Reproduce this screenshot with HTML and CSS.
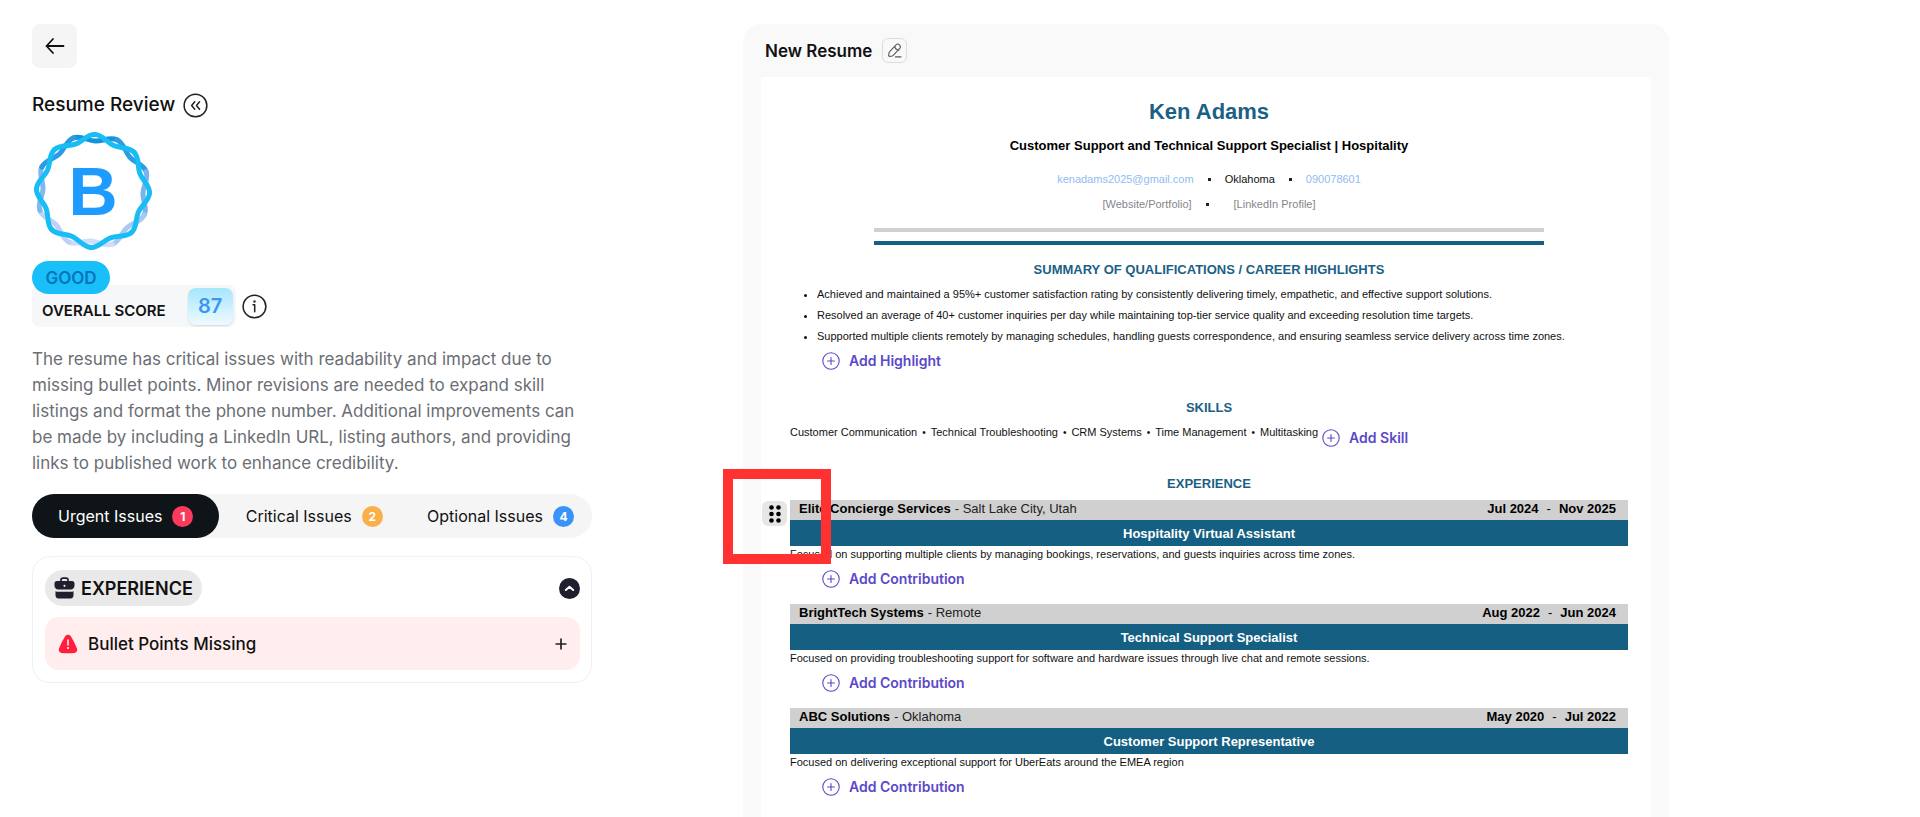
FILE: index.html
```
<!DOCTYPE html>
<html lang="en">
<head>
<meta charset="utf-8">
<title>Resume Review</title>
<link rel="stylesheet" href="styles.css">
</head>
<body>
<svg width="0" height="0" class="defs" aria-hidden="true">
  <symbol id="add" viewBox="0 0 18 18"><circle cx="9" cy="9" r="8.2" fill="none" stroke="currentColor" stroke-width="1.1"/><path d="M9 5.6v6.8M5.6 9h6.8" stroke="currentColor" stroke-width="1.1" stroke-linecap="round"/></symbol>
  <path id="lobe" d="M60 3.500C68 3.500 71.700 10.700 79.100 13.800S94.300 14.300 100 20" fill="none" stroke-width="5" stroke-linecap="round"/>
</svg>
<div class="app">
  <aside class="review">
    <button class="back" aria-label="Back"><svg width="20" height="18" viewBox="0 0 20 18" fill="none" stroke="#111" stroke-width="1.8" stroke-linecap="round" stroke-linejoin="round"><path d="M18.5 9H1.5M8 2L1.5 9L8 16"/></svg></button>
    <div class="title-row">
      <h1>Resume Review</h1>
      <button class="bare" aria-label="Collapse"><svg width="25" height="25" viewBox="0 0 26 26" fill="none" stroke="#222" stroke-width="1.6" stroke-linecap="round" stroke-linejoin="round"><circle cx="13" cy="13" r="11.8"/><path d="M12.2 9.2L9 13l3.2 3.8M17.2 9.2L14 13l3.2 3.8"/></svg></button>
    </div>
    <svg class="grade" width="120" height="120" viewBox="0 0 120 120" role="img" aria-label="Grade B">
      <g transform="rotate(-20 60 60)">
        <use href="#lobe" stroke="#1393dc"/>
        <use href="#lobe" stroke="#2f9ce2" transform="rotate(45 60 60)"/>
        <use href="#lobe" stroke="#79b4ec" transform="rotate(90 60 60)"/>
        <use href="#lobe" stroke="#a9c9f5" transform="rotate(135 60 60)"/>
        <use href="#lobe" stroke="#cfdcfc" transform="rotate(180 60 60)"/>
        <use href="#lobe" stroke="#bed2f9" transform="rotate(225 60 60)"/>
        <use href="#lobe" stroke="#7fb9ee" transform="rotate(270 60 60)"/>
        <use href="#lobe" stroke="#2c9ce2" transform="rotate(315 60 60)"/>
      </g>
      <g stroke="#19bdf6" transform="rotate(2 60 60)">
        <use href="#lobe"/>
        <use href="#lobe" transform="rotate(45 60 60)"/>
        <use href="#lobe" transform="rotate(90 60 60)"/>
        <use href="#lobe" transform="rotate(135 60 60)"/>
        <use href="#lobe" transform="rotate(180 60 60)"/>
        <use href="#lobe" transform="rotate(225 60 60)"/>
        <use href="#lobe" transform="rotate(270 60 60)"/>
        <use href="#lobe" transform="rotate(315 60 60)"/>
      </g>
      <text x="60" y="84" text-anchor="middle" class="letter">B</text>
    </svg>
    <div class="score-block">
      <span class="verdict">GOOD</span>
      <div class="score-row">
        <div class="score"><span>OVERALL SCORE</span><strong>87</strong></div>
        <button class="bare" aria-label="About the score"><svg width="25" height="25" viewBox="0 0 26 26" fill="none" stroke="#222" stroke-width="1.6" stroke-linecap="round" stroke-linejoin="round"><circle cx="13" cy="13" r="11.8"/><path d="M11.5 11.2h1.7v7.2"/><circle cx="13" cy="7.9" r=".5" fill="#222"/></svg></button>
      </div>
    </div>
    <p class="summary">The resume has critical issues with readability and impact due to missing bullet points. Minor revisions are needed to expand skill listings and format the phone number. Additional improvements can be made by including a LinkedIn URL, listing authors, and providing links to published work to enhance credibility.</p>
    <div class="tabs" role="tablist">
      <button class="tab active" role="tab">Urgent Issues <span class="count red">1</span></button>
      <button class="tab" role="tab">Critical Issues <span class="count amber">2</span></button>
      <button class="tab" role="tab">Optional Issues <span class="count blue">4</span></button>
    </div>
    <section class="card">
      <div class="card-head">
        <h2 class="topic"><svg width="21" height="22" viewBox="0 0 21 22"><path d="M7 5V3.2C7 2 7.700 1.200 9 1.200h3c1.300 0 2 .8 2 2V5" fill="none" stroke="#1f1f2e" stroke-width="1.700"/><path d="M3 4h15c1.600 0 2.500 1 2.500 2.500v2.300c0 2-1.600 3.700-3.600 3.700H4.100C2.100 12.500.5 10.800.5 8.800V6.500C.5 5 1.400 4 3 4z" fill="#1f1f2e"/><path d="M1.500 14.200c1 .5 2 .6 3 .6h12c1 0 2-.1 3-.6v4.100c0 2-1 3.200-3 3.200h-12c-2 0-3-1.200-3-3.200z" fill="#1f1f2e"/><circle cx="10.500" cy="8.800" r="1.100" fill="#e9e9e9"/></svg>EXPERIENCE</h2>
        <button class="bare" aria-label="Collapse section"><svg width="21" height="21" viewBox="0 0 21 21"><circle cx="10.500" cy="10.500" r="10.500" fill="#1f1f2e"/><path d="M6.800 12l3.700-3.200 3.700 3.200" fill="none" stroke="#fff" stroke-width="2" stroke-linecap="round" stroke-linejoin="round"/></svg></button>
      </div>
      <button class="issue"><svg width="20" height="20" viewBox="0 0 20 20"><path d="M7.200 2.300c1.200-2 4.400-2 5.600 0 2.500 4 4.500 8 6.200 12.300.8 2.300-.5 4.200-2.800 4.400-4.200.3-8.200.3-12.400 0C1.500 18.800.2 16.900 1 14.600 2.700 10.300 4.700 6.300 7.200 2.300z" fill="#ff1f3d"/><path d="M10 6v5" stroke="#fff" stroke-width="1.500" stroke-linecap="round"/><circle cx="10" cy="14" r="1" fill="#fff"/></svg><span>Bullet Points Missing</span><svg class="plus" width="12" height="12" viewBox="0 0 12 12"><path d="M6 .5v11M.5 6h11" stroke="#222" stroke-width="1.700"/></svg></button>
    </section>
  </aside>

  <main class="panel">
    <header class="panel-head">
      <h2>New Resume</h2>
      <button class="edit" aria-label="Rename"><svg width="15" height="15" viewBox="0 0 15 15" fill="none" stroke="#555" stroke-width="1.100" stroke-linecap="round" stroke-linejoin="round"><path d="M8.800 2.200L2.500 8.900c-.3.300-.5.700-.5 1.100l-.3 2.200c-.1.800.5 1.300 1.200 1.200l2.200-.4c.4-.1.800-.3 1.100-.6l6.300-6.700c1.100-1.200 1.500-2.400-.1-3.900-1.600-1.500-2.600-.8-3.600.4zM7.800 3.400c.3 2 2 3.500 4 3.700M8.500 13.900h5.500"/></svg></button>
    </header>
    <article class="paper">
      <h1 class="name">Ken Adams</h1>
      <p class="role">Customer Support and Technical Support Specialist | Hospitality</p>
      <p class="contact"><a href="#">kenadams2025@gmail.com</a><i></i><span>Oklahoma</span><i></i><a href="#">090078601</a></p>
      <p class="contact links"><span>[Website/Portfolio]</span><i></i><span class="linkedin">[LinkedIn Profile]</span></p>
      <hr class="rule grey"><hr class="rule">
      <h3>SUMMARY OF QUALIFICATIONS / CAREER HIGHLIGHTS</h3>
      <ul class="highlights">
        <li>Achieved and maintained a 95%+ customer satisfaction rating by consistently delivering timely, empathetic, and effective support solutions.</li>
        <li>Resolved an average of 40+ customer inquiries per day while maintaining top-tier service quality and exceeding resolution time targets.</li>
        <li>Supported multiple clients remotely by managing schedules, handling guests correspondence, and ensuring seamless service delivery across time zones.</li>
      </ul>
      <button class="add"><svg width="18" height="18"><use href="#add"/></svg>Add Highlight</button>
      <h3 class="later">SKILLS</h3>
      <div class="skills"><ul><li>Customer Communication</li><li>Technical Troubleshooting</li><li>CRM Systems</li><li>Time Management</li><li>Multitasking</li></ul><button class="add"><svg width="18" height="18"><use href="#add"/></svg>Add Skill</button></div>
      <h3 class="exp">EXPERIENCE</h3>
      <section class="job">
        <button class="drag" aria-label="Reorder"><svg width="12" height="18" viewBox="0 0 12 18"><circle cx="2.500" cy="2.500" r="2.300"/><circle cx="9.500" cy="2.500" r="2.300"/><circle cx="2.500" cy="9" r="2.300"/><circle cx="9.500" cy="9" r="2.300"/><circle cx="2.500" cy="15.500" r="2.300"/><circle cx="9.500" cy="15.500" r="2.300"/></svg></button>
        <span class="marker"></span>
        <div class="company"><b>Elite Concierge Services</b><span class="place">- Salt Lake City, Utah</span><span class="dates"><b>Jul 2024</b><span>-</span><b>Nov 2025</b></span></div>
        <h4>Hospitality Virtual Assistant</h4>
        <p>Focused on supporting multiple clients by managing bookings, reservations, and guests inquiries across time zones.</p>
        <button class="add"><svg width="18" height="18"><use href="#add"/></svg>Add Contribution</button>
      </section>
      <section class="job">
        <div class="company"><b>BrightTech Systems</b><span class="place">- Remote</span><span class="dates"><b>Aug 2022</b><span>-</span><b>Jun 2024</b></span></div>
        <h4>Technical Support Specialist</h4>
        <p>Focused on providing troubleshooting support for software and hardware issues through live chat and remote sessions.</p>
        <button class="add"><svg width="18" height="18"><use href="#add"/></svg>Add Contribution</button>
      </section>
      <section class="job">
        <div class="company"><b>ABC Solutions</b><span class="place">- Oklahoma</span><span class="dates"><b>May 2020</b><span>-</span><b>Jul 2022</b></span></div>
        <h4>Customer Support Representative</h4>
        <p>Focused on delivering exceptional support for UberEats around the EMEA region</p>
        <button class="add"><svg width="18" height="18"><use href="#add"/></svg>Add Contribution</button>
      </section>
    </article>
  </main>
</div>
</body>
</html>
```
FILE: styles.css
```
* { box-sizing: border-box; }
body { margin: 0; background: #fff; color: #111; font-family: Inter, "Liberation Sans", sans-serif; }
h1, h2, h3, h4, p, ul { margin: 0; padding: 0; }
button { font: inherit; color: inherit; border: 0; background: none; padding: 0; cursor: pointer; }
svg { display: block; flex: none; }
.defs { position: absolute; }

.app { display: grid; grid-template-columns: 743fr 926fr 251fr; min-height: 100vh; padding-top: 24px; }
.review { padding: 0 151px 0 32px; min-width: 0; }
.back { width: 45px; height: 44px; border-radius: 8px; background: #f5f5f5; display: grid; place-items: center; }
.title-row { display: flex; align-items: center; gap: 8px; margin-top: 24px; }
.title-row h1 { font-size: 19px; line-height: 26px; font-weight: 500; }
.grade { margin: 13px 0 0 1px; }
.letter { font: bold 68px "Liberation Sans", sans-serif; fill: #1e9bff; }

.score-block { margin-top: 10px; }
.verdict { position: relative; display: flex; align-items: center; justify-content: center; width: 78px; height: 33px; border-radius: 17px; background: #19bff9; color: #0873bd; font-size: 17px; font-weight: 600; }
.score-row { display: flex; align-items: center; gap: 6px; margin-top: -9px; }
.score { display: flex; align-items: center; gap: 22px; height: 42px; padding: 0 3px 0 10px; border-radius: 8px; background: #f6f7f9; }
.score span { font-size: 15px; font-weight: 600; padding-top: 8px; }
.score strong { width: 45px; height: 37px; border-radius: 8px; background: linear-gradient(#a5e6fc, #effaff); box-shadow: 0 1px 2px #0002; display: grid; place-items: center; font-size: 20px; font-weight: 600; color: #3a97f5; }

.summary { margin-top: 19px; color: #6b6e74; font-size: 17px; line-height: 26px; }

.tabs { display: flex; justify-content: space-between; height: 44px; margin-top: 18px; border-radius: 22px; background: #f5f5f5; }
.tab { display: flex; align-items: center; gap: 10px; padding: 0 18px 0 24px; font-size: 16px; white-space: nowrap; }
.tab.active { background: #0f1418; color: #fff; border-radius: 22px; padding: 0 26px; }
.count { width: 21px; height: 21px; border-radius: 50%; display: grid; place-items: center; color: #fff; font-size: 12px; font-weight: 700; }
.red { background: #fb3a5d; }
.amber { background: #f9b04b; }
.blue { background: #3a93fb; }

.card { margin-top: 18px; padding: 13px 11px 12px 12px; border: 1px solid #f0f0f0; border-radius: 18px; }
.card-head { display: flex; align-items: center; justify-content: space-between; }
.topic { display: flex; align-items: center; gap: 6px; height: 36px; padding: 0 9px; border-radius: 18px; background: #e9e9e9; font-size: 18px; font-weight: 600; }
.issue { display: flex; align-items: center; gap: 10px; width: 100%; height: 53px; margin-top: 11px; padding: 0 13px; border-radius: 14px; background: #ffeeed; font-size: 17px; font-weight: 500; }
.plus { margin-left: auto; }

.panel { min-width: 0; padding: 0 18px; border-radius: 18px 18px 0 0; background: #f9f9f9; display: flex; flex-direction: column; }
.panel-head { display: flex; align-items: center; gap: 10px; height: 53px; padding-left: 4px; }
.panel-head h2 { font-size: 17px; font-weight: 600; }
.edit { width: 25px; height: 25px; border: 1px solid #dcdcdc; border-radius: 6px; display: grid; place-items: center; }

.paper { flex: 1; padding: 21px 23px 16px 29px; background: #fff; color: #111; font-family: "Liberation Sans", Arial, sans-serif; font-size: 11px; line-height: 16px; }
.name { font-size: 22px; line-height: 28px; text-align: center; color: #1a6185; }
.role { margin-top: 12px; text-align: center; font-size: 13px; line-height: 16px; font-weight: 700; color: #000; }
.contact { display: flex; align-items: center; justify-content: center; gap: 14px; margin-top: 17px; }
.contact a { color: #8fbcf2; text-decoration: none; }
.contact i { width: 3px; height: 3px; background: #222; }
.contact.links { margin-top: 9px; color: #84868c; }
.linkedin { margin-left: 11px; }
.rule { width: 80%; height: 4px; margin: 16px auto 0; border: 0; background: #155f82; }
.rule + .rule { margin-top: 9px; }
.rule.grey { background: #d0d0d0; }
h3 { margin-top: 17px; text-align: center; font-size: 13px; line-height: 16px; color: #1a6185; }
.highlights { margin-top: 6px; padding-left: 27px; line-height: 21px; }
.add { display: flex; align-items: center; gap: 9px; margin: 5px 0 0 32px; height: 18px; color: #5b48c8; font-family: Inter, "Liberation Sans", sans-serif; font-size: 14px; font-weight: 600; }
h3.later { margin-top: 30px; }
.skills { display: flex; gap: 4px; margin-top: 8px; height: 26px; }
.skills ul { display: flex; list-style: none; white-space: nowrap; }
.skills li + li::before { content: "•"; margin: 0 5px; font-size: 10px; }
.skills .add { margin: 5px 0 0; }
h3.exp { margin-top: 26px; margin-bottom: 8px; }

.job { position: relative; padding-bottom: 16px; }
.company { display: flex; align-items: center; gap: 4px; height: 20px; padding: 0 12px 2px 9px; background: #d0d0d0; font-size: 13px; color: #000; }
.place { color: #222; }
.dates { display: flex; gap: 8px; margin-left: auto; }
.job h4 { height: 26px; line-height: 27px; background: #155f82; color: #fff; text-align: center; font-size: 13px; }
.job .add { margin-top: 8px; }
.drag { position: absolute; left: -28px; top: 1px; width: 25px; height: 25px; border-radius: 6px; background: #e6e6e6; display: grid; place-items: center; }
.marker { position: absolute; left: -67px; top: -31px; width: 108px; height: 95px; border: 10px solid #ff3131; pointer-events: none; }
```
